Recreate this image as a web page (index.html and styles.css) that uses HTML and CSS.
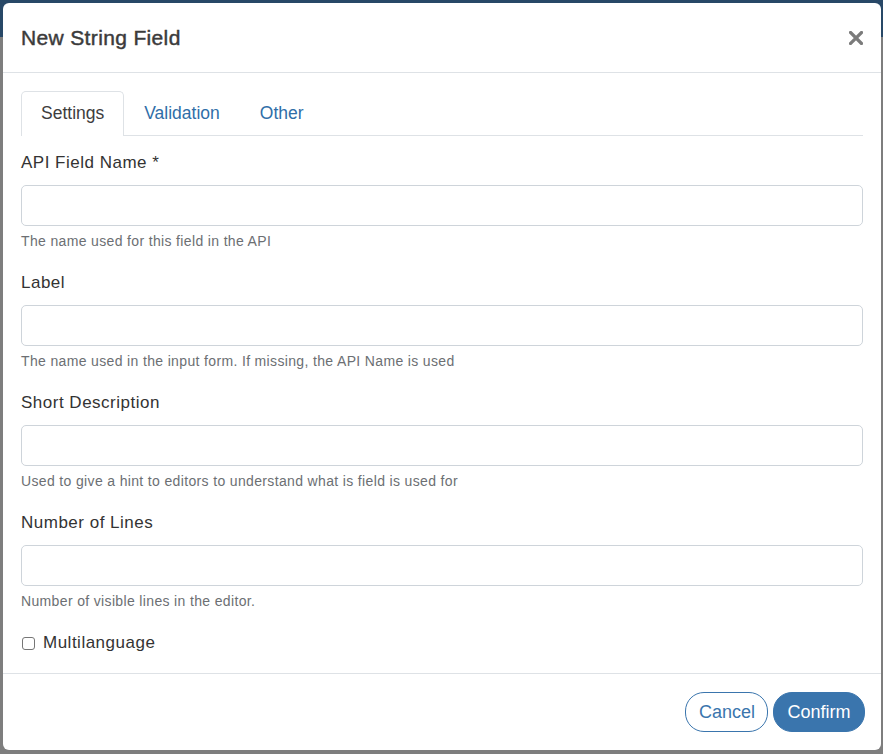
FILE: index.html
```html
<!DOCTYPE html>
<html lang="en">
<head>
<meta charset="utf-8">
<title>New String Field</title>
<link rel="stylesheet" href="styles.css">
</head>
<body>
<div class="backdrop">
  <div class="backdrop-top"></div>
  <div class="backdrop-rest"></div>
</div>
<div class="modal">
  <div class="modal-header">
    <h5 class="modal-title">New String Field</h5>
    <button class="close" aria-label="Close">
      <svg width="14" height="14" viewBox="0 0 14 14"><path d="M1.5 1.5 L12.5 12.5 M12.5 1.5 L1.5 12.5" stroke="#7b7b7b" stroke-width="3.2" stroke-linecap="square" fill="none"/></svg>
    </button>
  </div>
  <div class="modal-body">
    <ul class="nav-tabs">
      <li class="tab active">Settings</li>
      <li class="tab">Validation</li>
      <li class="tab">Other</li>
    </ul>
    <div class="tab-content">
      <div class="form-group">
        <label class="form-label">API Field Name *</label>
        <input class="form-control" type="text">
        <div class="form-text">The name used for this field in the API</div>
      </div>
      <div class="form-group">
        <label class="form-label">Label</label>
        <input class="form-control" type="text">
        <div class="form-text">The name used in the input form. If missing, the API Name is used</div>
      </div>
      <div class="form-group">
        <label class="form-label">Short Description</label>
        <input class="form-control" type="text">
        <div class="form-text">Used to give a hint to editors to understand what is field is used for</div>
      </div>
      <div class="form-group">
        <label class="form-label">Number of Lines</label>
        <input class="form-control" type="text">
        <div class="form-text">Number of visible lines in the editor.</div>
      </div>
      <div class="form-check">
        <span class="check-box"></span>
        <span class="check-label">Multilanguage</span>
      </div>
    </div>
  </div>
  <div class="modal-footer">
    <button class="btn btn-outline">Cancel</button>
    <button class="btn btn-primary">Confirm</button>
  </div>
</div>
</body>
</html>
```
FILE: styles.css
```css
* { box-sizing: border-box; }
html, body { margin: 0; padding: 0; }
body {
  width: 883px;
  height: 754px;
  overflow: hidden;
  font-family: "Liberation Sans", Arial, sans-serif;
  color: #333;
  position: relative;
}
.backdrop {
  display: flex;
  flex-direction: column;
  height: 754px;
}
.backdrop-top { height: 37px; background: #284867; }
.backdrop-rest { flex: 1; background: #7e7e7e; }
.modal {
  position: absolute;
  top: 3px;
  left: 3px;
  width: 878px;
  height: 747px;
  background: #fff;
  border-radius: 6px;
  display: flex;
  flex-direction: column;
  overflow: hidden;
}
.modal-header {
  display: flex;
  align-items: center;
  justify-content: space-between;
  padding: 18px;
  border-bottom: 1px solid #dee2e6;
  height: 70px;
}
.modal-title {
  margin: 0;
  font-size: 21px;
  font-weight: 400;
  letter-spacing: 0.35px;
  -webkit-text-stroke: 0.45px #3b3b3b;
  color: #3b3b3b;
  line-height: 33px;
}
.close {
  border: 0;
  background: none;
  padding: 0;
  width: 14px;
  height: 14px;
  display: flex;
}
.modal-body {
  padding: 18px 18px 15px 18px;
  flex: 1;
}
.nav-tabs {
  list-style: none;
  margin: 0;
  padding: 0;
  display: flex;
  border-bottom: 1px solid #dee2e6;
}
.tab {
  padding: 9px 19px 11px;
  line-height: 24px;
  font-size: 17.5px;
  color: #2f6ea8;
  border: 1px solid transparent;
  border-bottom: 0;
  border-radius: 5px 5px 0 0;
  margin-bottom: -1px;
  height: 45px;
}
.tab.active {
  color: #3d3d3d;
  border-color: #dee2e6;
  background: #fff;
}
.tab-content { padding-top: 15px; }
.form-group { margin-bottom: 20px; }
.form-label {
  display: block;
  font-size: 17px;
  letter-spacing: 0.5px;
  line-height: 24px;
  margin-bottom: 10px;
  color: #333;
}
.form-control {
  display: block;
  width: 100%;
  height: 41px;
  border: 1px solid #ced4da;
  border-radius: 5px;
  background: #fff;
  margin: 0;
  padding: 6px 12px;
  font-size: 16px;
}
.form-text {
  margin-top: 5px;
  font-size: 14px;
  letter-spacing: 0.35px;
  line-height: 20px;
  color: #6c6f73;
}
.form-check {
  display: flex;
  align-items: center;
  height: 24px;
}
.check-box {
  width: 13px;
  height: 13px;
  border: 1px solid #767676;
  border-radius: 3px;
  margin-left: 1px;
  margin-right: 8px;
  background: #fff;
}
.check-label {
  font-size: 17px;
  letter-spacing: 0.5px;
  line-height: 24px;
  color: #333;
}
.modal-footer {
  display: flex;
  justify-content: flex-end;
  align-items: center;
  gap: 5px;
  border-top: 1px solid #dee2e6;
  padding: 18px 16px 18px 18px;
}
.btn {
  height: 40px;
  border-radius: 19px;
  font-family: "Liberation Sans", Arial, sans-serif;
  font-size: 18px;
  padding: 0 13px;
  line-height: 38px;
  border: 1px solid #3a75ad;
  cursor: pointer;
}
.btn-outline {
  background: #fff;
  color: #3a75ad;
  width: 83px;
}
.btn-primary {
  background: #3a75ad;
  color: #fff;
  width: 92px;
}
```
